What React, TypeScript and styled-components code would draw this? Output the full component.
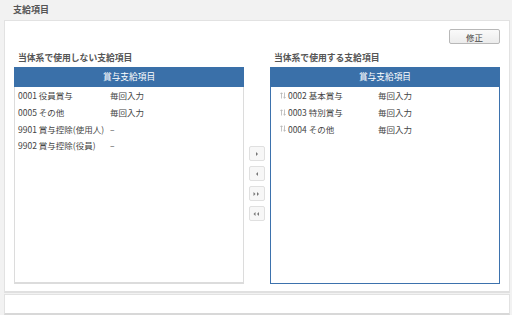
import { FC } from "react";
import styled, { createGlobalStyle } from "styled-components";

const GlobalStyle = createGlobalStyle`
  html, body {
    margin: 0;
    padding: 0;
    background: #f2f2f2;
  }
  body {
    font-family: "Noto Sans CJK JP", "Noto Sans", sans-serif;
    color: #444;
  }
`

type Item = {
    code: string;
    name: string;
    input: string;
}

const unused: Item[] = [
    {code: "0001", name: "役員賞与", input: "毎回入力"},
    {code: "0005", name: "その他", input: "毎回入力"},
    {code: "9901", name: "賞与控除(使用人)", input: "–"},
    {code: "9902", name: "賞与控除(役員)", input: "–"},
]

const used: Item[] = [
    {code: "0002", name: "基本賞与", input: "毎回入力"},
    {code: "0003", name: "特別賞与", input: "毎回入力"},
    {code: "0004", name: "その他", input: "毎回入力"},
]

const Page = styled.div`
  width: 512px;
  height: 315px;
  display: flex;
  flex-direction: column;
  overflow: hidden;
`

const Title = styled.div`
  height: 20px;
  line-height: 20px;
  padding-left: 13px;
  font-size: 9px;
  font-weight: bold;
  color: #555;
`

const Panel = styled.div`
  margin: 0 2px 0 4px;
  background: #fff;
  border: 1px solid #e2e2e2;
  border-bottom: 2px solid #e0e0e0;
  padding: 8px 9px 7px 9px;
  height: 273px;
  box-sizing: border-box;
  display: flex;
  flex-direction: column;
`

const ToolRow = styled.div`
  display: flex;
  justify-content: flex-end;
  height: 15px;
`

const EditButton = styled.button`
  width: 51px;
  height: 15px;
  padding: 0;
  font-family: inherit;
  font-size: 8.5px;
  color: #444;
  background: linear-gradient(#fafafa, #ececec);
  border: 1px solid #b8b8b8;
  border-radius: 2px;
`

const Columns = styled.div`
  flex: 1;
  display: flex;
  margin-top: 7px;
`

const Column = styled.div`
  width: 231px;
  display: flex;
  flex-direction: column;
`

const Label = styled.div`
  height: 13px;
  line-height: 13px;
  padding-left: 4px;
  font-size: 8.8px;
  font-weight: bold;
  color: #555;
`

const ListBox = styled.div<{ $active?: boolean }>`
  flex: 1;
  margin-top: 3px;
  border: 1px solid ${p => p.$active ? "#3d72ad" : "#dcdcdc"};
  ${p => p.$active ? "" : "border-bottom-width: 2px;"}
  background: #fff;
`

const ListHeader = styled.div`
  height: 20px;
  line-height: 20px;
  margin: -1px -1px 0 -1px;
  background: #3a70a9;
  color: #fff;
  font-size: 8.7px;
  text-align: center;
`

const Row = styled.div<{ $sortable?: boolean }>`
  height: 16.7px;
  display: flex;
  align-items: center;
  gap: 2px;
  padding-left: ${p => p.$sortable ? "9px" : "3px"};
  font-size: 8.5px;
  color: #444;
`

const Name = styled.span<{ $width: number }>`
  width: ${p => p.$width}px;
  white-space: nowrap;
`

const Middle = styled.div`
  width: 26px;
  display: flex;
  flex-direction: column;
  align-items: center;
  gap: 5px;
  padding-top: 95px;
`

const MoveButton = styled.button`
  width: 16px;
  height: 15px;
  padding: 0;
  display: flex;
  align-items: center;
  justify-content: center;
  background: #f7f7f7;
  border: 1px solid #e0e0e0;
  border-radius: 2px;
`

const Footer = styled.div`
  margin: 1px 2px 0 4px;
  height: 18px;
  background: #fff;
  border: 1px solid #e2e2e2;
  border-bottom: 2px solid #d8d8d8;
`

const SortIcon: FC = () => (
    <svg width="6" height="7" viewBox="0 0 6 7">
        <path d="M1.5 6.5 V0.8 M0.3 2 L1.5 0.8 L2.7 2" stroke="#aaa" strokeWidth="0.7" fill="none"/>
        <path d="M4.5 0.5 V6.2 M3.3 5 L4.5 6.2 L5.7 5" stroke="#aaa" strokeWidth="0.7" fill="none"/>
    </svg>
)

const Arrow: FC<{ dir: "r" | "l"; double?: boolean }> = ({dir, double}) => {
    const one = (x: number) => dir === "r"
        ? <path key={x} d={`M${x} 1 L${x + 2} 3 L${x} 5 Z`} fill="#777"/>
        : <path key={x} d={`M${x + 2} 1 L${x} 3 L${x + 2} 5 Z`} fill="#777"/>
    return (
        <svg width={double ? 7 : 4} height="6" viewBox={double ? "0 0 7 6" : "0 0 4 6"}>
            {double ? [one(0.5), one(4)] : one(1)}
        </svg>
    )
}

const ItemList: FC<{ title: string; items: Item[]; sortable?: boolean; nameWidth: number }> = ({title, items, sortable, nameWidth}) => (
    <Column>
        <Label>{title}</Label>
        <ListBox $active={sortable}>
            <ListHeader>賞与支給項目</ListHeader>
            {items.map(i => (
                <Row key={i.code} $sortable={sortable}>
                    {sortable && <SortIcon/>}
                    <Name $width={nameWidth}>{i.code} {i.name}</Name>
                    <span>{i.input}</span>
                </Row>
            ))}
        </ListBox>
    </Column>
)

export default function App() {
    return (
        <Page>
            <GlobalStyle/>
            <Title>支給項目</Title>
            <Panel>
                <ToolRow>
                    <EditButton>修正</EditButton>
                </ToolRow>
                <Columns>
                    <ItemList title="当体系で使用しない支給項目" items={unused} nameWidth={90}/>
                    <Middle>
                        <MoveButton><Arrow dir="r"/></MoveButton>
                        <MoveButton><Arrow dir="l"/></MoveButton>
                        <MoveButton><Arrow dir="r" double/></MoveButton>
                        <MoveButton><Arrow dir="l" double/></MoveButton>
                    </Middle>
                    <ItemList title="当体系で使用する支給項目" items={used} sortable nameWidth={88}/>
                </Columns>
            </Panel>
            <Footer/>
        </Page>
    );
}
